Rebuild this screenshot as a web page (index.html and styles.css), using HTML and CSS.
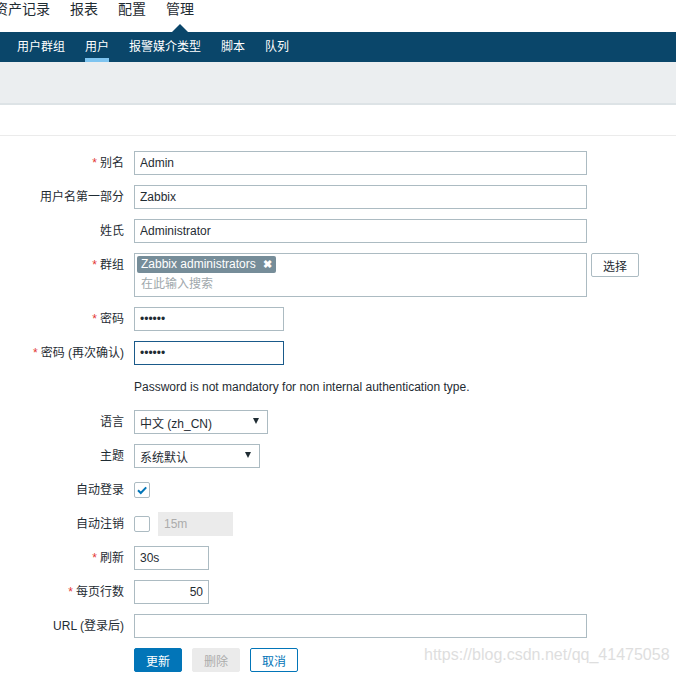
FILE: index.html
```html
<!DOCTYPE html>
<html lang="zh">
<head>
<meta charset="utf-8">
<title>用户</title>
<link rel="stylesheet" href="styles.css">
</head>
<body>
<div class="page">
  <nav class="top-nav">
    <span class="top-item">资产记录</span>
    <span class="top-item">报表</span>
    <span class="top-item">配置</span>
    <span class="top-item active">管理</span>
  </nav>
  <nav class="sub-nav">
    <span class="sub-item">用户群组</span>
    <span class="sub-item active">用户</span>
    <span class="sub-item">报警媒介类型</span>
    <span class="sub-item">脚本</span>
    <span class="sub-item">队列</span>
  </nav>
  <div class="header"></div>
  <div class="tabs"></div>

  <form class="form">
    <label class="label"><span class="req">*</span>别名</label>
    <div class="field"><input class="input wide" type="text" value="Admin"></div>

    <label class="label">用户名第一部分</label>
    <div class="field"><input class="input wide" type="text" value="Zabbix"></div>

    <label class="label">姓氏</label>
    <div class="field"><input class="input wide" type="text" value="Administrator"></div>

    <label class="label"><span class="req">*</span>群组</label>
    <div class="field">
      <div class="multiselect">
        <span class="chip">Zabbix administrators <span class="chip-x">✖</span></span>
        <span class="ms-placeholder">在此输入搜索</span>
      </div>
      <button type="button" class="btn-alt">选择</button>
    </div>

    <label class="label"><span class="req">*</span>密码</label>
    <div class="field"><input class="input pw" type="password" value="zabbix"></div>

    <label class="label"><span class="req">*</span>密码 (再次确认)</label>
    <div class="field"><input class="input pw focused" type="password" value="zabbix"></div>

    <span class="label"></span>
    <div class="hint">Password is not mandatory for non internal authentication type.</div>

    <label class="label">语言</label>
    <div class="field"><div class="select lang"><span>中文 (zh_CN)</span><span class="arrow"></span></div></div>

    <label class="label">主题</label>
    <div class="field"><div class="select theme"><span>系统默认</span><span class="arrow"></span></div></div>

    <label class="label">自动登录</label>
    <div class="field">
      <span class="checkbox">
        <svg width="14" height="14" viewBox="0 0 14 14"><path d="M3 7.2 L5.8 10 L11.2 4.4" fill="none" stroke="#0275b8" stroke-width="2"/></svg>
      </span>
    </div>

    <label class="label">自动注销</label>
    <div class="field gap8">
      <span class="checkbox"></span>
      <input class="input short disabled" type="text" value="15m" disabled>
    </div>

    <label class="label"><span class="req">*</span>刷新</label>
    <div class="field"><input class="input short" type="text" value="30s"></div>

    <label class="label"><span class="req">*</span>每页行数</label>
    <div class="field"><input class="input short right" type="text" value="50"></div>

    <label class="label">URL (登录后)</label>
    <div class="field"><input class="input wide" type="text" value=""></div>

    <span class="label"></span>
    <div class="field buttons">
      <button type="button" class="btn primary">更新</button>
      <button type="button" class="btn disabled-btn">删除</button>
      <button type="button" class="btn outline">取消</button>
    </div>
  </form>

  <div class="watermark">https://blog.csdn.net/qq_41475058</div>
</div>
</body>
</html>
```
FILE: styles.css
```css
html, body {
  margin: 0;
  padding: 0;
  background: #ffffff;
}
body {
  width: 676px;
  height: 673px;
  overflow: hidden;
  font-family: "Liberation Sans", "Noto Sans CJK SC", Arial, sans-serif;
  font-size: 12px;
  color: #1f2c33;
}
.page {
  position: relative;
  height: 673px;
}

/* top navigation */
.top-nav {
  display: flex;
  gap: 20px;
  height: 32px;
  margin-left: -6px;
  font-size: 14px;
}
.top-item {
  position: relative;
  line-height: 18px;
  height: 32px;
  color: #1f2c33;
}
.top-item.active::after {
  content: "";
  position: absolute;
  left: 50%;
  bottom: 0;
  margin-left: -8px;
  border-left: 8px solid transparent;
  border-right: 8px solid transparent;
  border-bottom: 8px solid #0a466a;
}

/* sub navigation */
.sub-nav {
  display: flex;
  gap: 20px;
  height: 30px;
  padding-left: 17px;
  background: #0a466a;
}
.sub-item {
  line-height: 30px;
  height: 30px;
  color: #ffffff;
  font-size: 12px;
}
.sub-item.active {
  box-shadow: inset 0 -4px 0 #7ec4f0;
}

.header {
  height: 41px;
  background: #ebeef0;
  border-bottom: 2px solid #dde3e6;
}
.tabs {
  height: 30px;
  border-bottom: 1px solid #ebebeb;
}

/* form */
.form {
  display: grid;
  grid-template-columns: 124px 1fr;
  column-gap: 10px;
  row-gap: 10px;
  padding-top: 15px;
}
.label {
  text-align: right;
  line-height: 24px;
  white-space: nowrap;
}
.req {
  color: #e33734;
  margin-right: 3px;
}
.field {
  display: flex;
  align-items: flex-start;
  gap: 4px;
  min-height: 24px;
}
.field.gap8 {
  gap: 8px;
  align-items: center;
}
.input {
  box-sizing: border-box;
  height: 24px;
  margin: 0;
  padding: 0 5px;
  border: 1px solid #acbbc2;
  border-radius: 0;
  background: #ffffff;
  font-family: "Liberation Sans", "Noto Sans CJK SC", Arial, sans-serif;
  font-size: 12px;
  color: #1f2c33;
  outline: none;
}
.input.wide { width: 453px; }
.input.pw { width: 150px; letter-spacing: 0; }
.input.short { width: 75px; }
.input.right { text-align: right; }
.input.focused { border-color: #1a5a8a; }
.input.disabled {
  background: #ebebeb;
  border-color: #ebebeb;
  color: #acacac;
}

.multiselect {
  box-sizing: border-box;
  width: 453px;
  height: 44px;
  border: 1px solid #acbbc2;
  padding: 2px 2px 0 2px;
  display: flex;
  flex-direction: column;
  align-items: flex-start;
}
.chip {
  display: inline-block;
  height: 17px;
  line-height: 17px;
  padding: 0 4px;
  background: #768d99;
  color: #ffffff;
  border-radius: 2px;
}
.chip-x {
  margin-left: 4px;
  font-size: 11px;
  font-weight: bold;
}
.ms-placeholder {
  margin-top: 2px;
  padding-left: 4px;
  color: #a0a8ac;
  line-height: 18px;
}
.btn-alt {
  box-sizing: border-box;
  width: 48px;
  height: 24px;
  background: #ffffff;
  border: 1px solid #acbbc2;
  border-radius: 2px;
  font-family: "Liberation Sans", "Noto Sans CJK SC", Arial, sans-serif;
  font-size: 12px;
  color: #1f2c33;
  padding: 0;
}

.hint {
  line-height: 25px;
  height: 25px;
}

.select {
  box-sizing: border-box;
  height: 24px;
  border: 1px solid #acbbc2;
  display: flex;
  align-items: center;
  justify-content: space-between;
  padding: 0 8px 0 5px;
}
.select.lang { width: 134px; }
.select.theme { width: 126px; }
.arrow {
  width: 0;
  height: 0;
  border-left: 3.5px solid transparent;
  border-right: 3.5px solid transparent;
  border-top: 6px solid #1f2c33;
  margin-top: -2px;
}

.checkbox {
  box-sizing: border-box;
  width: 16px;
  height: 16px;
  margin-top: 4px;
  border: 1px solid #acbbc2;
  border-radius: 2px;
  display: flex;
  align-items: center;
  justify-content: center;
}
.field.gap8 .checkbox { margin-top: 0; }

.buttons {
  gap: 10px;
}
.btn {
  box-sizing: border-box;
  width: 48px;
  height: 24px;
  padding: 0;
  border-radius: 2px;
  font-family: "Liberation Sans", "Noto Sans CJK SC", Arial, sans-serif;
  font-size: 12px;
  border: 1px solid #0275b8;
}
.btn.primary {
  background: #0275b8;
  color: #ffffff;
}
.btn.disabled-btn {
  background: #ebebeb;
  border-color: #ebebeb;
  color: #acacac;
}
.btn.outline {
  background: #ffffff;
  color: #0275b8;
}

.watermark {
  position: absolute;
  left: 424px;
  top: 645px;
  font-size: 16px;
  line-height: 20px;
  color: #dedede;
  white-space: nowrap;
}
```
